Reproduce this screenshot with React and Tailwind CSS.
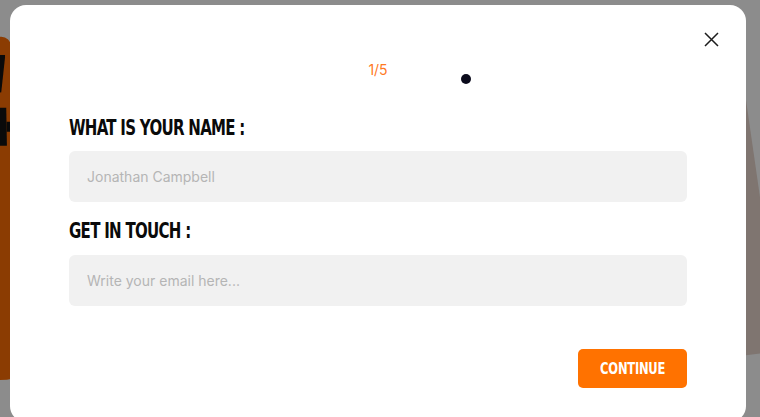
import React from "react";

const heading = {
  fontFamily: '"Liberation Sans Narrow", "DejaVu Sans Condensed", "Liberation Sans", sans-serif',
};
const body = { fontFamily: 'Inter, "Liberation Sans", sans-serif' };

function Field({ label, placeholder, gap }) {
  return (
    <div className={`flex flex-col ${gap}`}>
      <div
        className="inline-block origin-left scale-x-[0.795] text-[21px] leading-[24px] font-bold tracking-[-0.9px] text-[#0a0a0a] whitespace-nowrap"
        style={heading}
      >
        {label}
      </div>
      <div
        className="h-[51px] rounded-[6px] bg-[#f1f1f1] flex items-center pl-[18px] text-[14px] text-[#b5b5b5]"
        style={body}
      >
        {placeholder}
      </div>
    </div>
  );
}

export default function App() {
  return (
    <div className="relative w-[760px] h-[417px] overflow-hidden bg-[#8c8c8c]">
      {/* background page fragments */}
      <div className="absolute left-[-30px] top-[37px] w-[44px] h-[343px] rounded-[10px] bg-[#8b3c02] rotate-[-1deg]">
        <div className="ml-[30px] mt-[18px] w-[8px] h-[38px] bg-[#0a0a0a] [clip-path:polygon(0_0,100%_0,40%_100%,0_100%)]" />
        <div className="ml-[30px] mt-[15px] flex items-center">
          <div className="w-[8px] h-[38px] bg-[#0a0a0a]" />
          <div className="w-[4px] h-[10px] bg-[#0a0a0a]" />
        </div>
      </div>
      <div className="absolute right-0 top-[100px] w-[20px] h-[256px] bg-[#7f7570] [clip-path:polygon(0_0,30%_0,100%_38%,100%_99%,0_100%)]" />

      {/* modal */}
      <div className="relative ml-[10px] mt-[5px] w-[736px] h-[417px] rounded-[16px] bg-white px-[59px] pt-[55px] flex flex-col">
        <button className="absolute right-[27px] top-[27px] w-[15px] h-[15px] flex items-center justify-center">
          <svg width="15" height="15" viewBox="0 0 15 15" fill="none">
            <path d="M1 1L14 14M14 1L1 14" stroke="#1c1c1c" strokeWidth="1.5" />
          </svg>
        </button>
        <div className="absolute left-[451px] top-[69px] w-[10px] h-[10px] rounded-full bg-[#0b0b1c]" />

        <div className="text-center text-[14px] leading-[20px] text-[#ff7a1f]" style={body}>
          1/5
        </div>

        <div className="mt-[36px] flex flex-col gap-[17px]">
          <Field label="WHAT IS YOUR NAME :" placeholder="Jonathan Campbell" gap="gap-[11px]" />
          <Field label="GET IN TOUCH :" placeholder="Write your email here..." gap="gap-[12px]" />
        </div>

        <div className="mt-[43px] flex justify-end">
          <button className="w-[109px] h-[39px] rounded-[5px] bg-[#ff7200] flex items-center justify-center">
            <span
              className="inline-block scale-x-[0.8] text-white text-[16px] font-bold tracking-[-0.3px]"
              style={heading}
            >
              CONTINUE
            </span>
          </button>
        </div>
      </div>
    </div>
  );
}
